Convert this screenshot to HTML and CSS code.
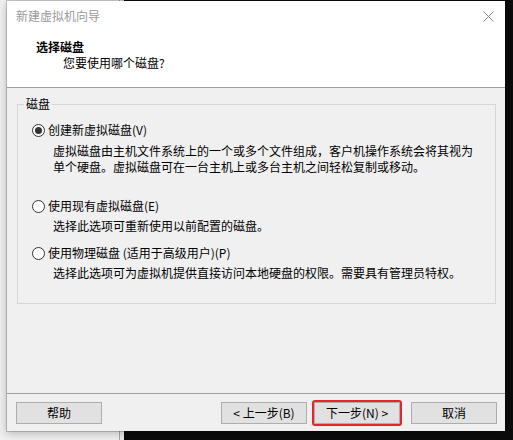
FILE: index.html
```html
<!DOCTYPE html>
<html lang="zh-CN">
<head>
<meta charset="utf-8">
<title>新建虚拟机向导</title>
<link rel="stylesheet" href="styles.css">
</head>
<body>
<div class="desktop">
  <div class="pane-left"></div>
  <div class="pane-split"></div>
  <div class="pane-gap"></div>
  <div class="pane-dark"></div>
</div>

<div class="dialog">
  <div class="titlebar">
    <span class="title">新建虚拟机向导</span>
    <svg class="close" width="11" height="11" viewBox="0 0 11 11">
      <path d="M0.5 0.5 L10.5 10.5 M10.5 0.5 L0.5 10.5" stroke="#8a8a8a" stroke-width="1" fill="none"/>
    </svg>
  </div>
  <div class="header">
    <div class="h-title">选择磁盘</div>
    <div class="h-sub">您要使用哪个磁盘?</div>
  </div>
  <div class="body">
    <fieldset class="group">
      <legend class="group-label">磁盘</legend>
      <div class="opt opt-first">
        <span class="radio checked"></span>
        <span class="opt-label">创建新虚拟磁盘(V)</span>
      </div>
      <div class="desc desc-first">虚拟磁盘由主机文件系统上的一个或多个文件组成，客户机操作系统会将其视为<br>单个硬盘。虚拟磁盘可在一台主机上或多台主机之间轻松复制或移动。</div>
      <div class="opt opt-second">
        <span class="radio"></span>
        <span class="opt-label">使用现有虚拟磁盘(E)</span>
      </div>
      <div class="desc">选择此选项可重新使用以前配置的磁盘。</div>
      <div class="opt opt-third">
        <span class="radio"></span>
        <span class="opt-label">使用物理磁盘 (适用于高级用户)(P)</span>
      </div>
      <div class="desc">选择此选项可为虚拟机提供直接访问本地硬盘的权限。需要具有管理员特权。</div>
    </fieldset>
  </div>
  <div class="footer">
    <button class="btn">帮助</button>
    <div class="spacer"></div>
    <button class="btn">&lt; 上一步(B)</button>
    <button class="btn btn-next">下一步(N) &gt;</button>
    <button class="btn btn-cancel">取消</button>
  </div>
</div>
</body>
</html>
```

FILE: styles.css
```css
html, body {
  margin: 0;
  padding: 0;
}
body {
  width: 513px;
  height: 440px;
  overflow: hidden;
  position: relative;
  font-family: "Noto Sans CJK SC", "Microsoft YaHei", sans-serif;
  font-size: 12px;
  color: #000;
}
.desktop {
  display: flex;
  height: 440px;
}
.pane-left {
  width: 119px;
  background: #f0f0f0;
}
.pane-split {
  width: 1px;
  background: #a8a8a8;
}
.pane-gap {
  width: 4px;
  background: #ececec;
}
.pane-dark {
  flex: 1;
  background: #0b0b0b;
}

.dialog {
  position: absolute;
  left: 7px;
  top: 1px;
  width: 498px;
  height: 430px;
  background: #f0f0f0;
  box-shadow: 0 0 0 1px rgba(0,0,0,0.18), -1px 3px 8px rgba(0,0,0,0.22);
  display: flex;
  flex-direction: column;
}

.titlebar {
  height: 30px;
  background: #fff;
  display: flex;
  align-items: center;
  justify-content: space-between;
  padding: 0 11px 0 9px;
}
.title {
  color: #9a9a9a;
  line-height: 16px;
}
.close {
  display: block;
}

.header {
  background: #fff;
  padding: 8px 0 16px 29px;
  border-bottom: 1px solid #a0a0a0;
}
.h-title {
  font-weight: bold;
  line-height: 16px;
}
.h-sub {
  line-height: 16px;
  padding-left: 27px;
}

.body {
  height: 305px;
  box-sizing: border-box;
  padding: 8px 9px 0 10px;
}
.group {
  margin: 0;
  padding: 10px 0 22px 0;
  border: 1px solid #d6d6d6;
  min-width: 0;
}
.group-label {
  margin-left: 6px;
  padding: 0 2px;
  line-height: 16px;
}

.opt {
  display: flex;
  align-items: center;
  height: 16px;
  line-height: 16px;
  margin-left: 14px;
}
.opt-second {
  margin-top: 23px;
}
.opt-third {
  margin-top: 11px;
}
.radio {
  width: 13px;
  height: 13px;
  box-sizing: border-box;
  border: 1px solid #333;
  border-radius: 50%;
  background: #fff;
  margin-right: 3px;
  display: flex;
  align-items: center;
  justify-content: center;
}
.radio.checked::after {
  content: "";
  width: 7px;
  height: 7px;
  border-radius: 50%;
  background: #333;
}
.desc {
  margin-top: 4px;
  padding-left: 35px;
  line-height: 16px;
}
.desc-first {
  margin-top: 5px;
}

.footer {
  flex: 1;
  border-top: 1px solid #a0a0a0;
  display: flex;
  align-items: flex-start;
  padding: 8px 8px 0 9px;
}
.spacer {
  flex: 1;
}
.btn {
  width: 86px;
  height: 22px;
  box-sizing: border-box;
  border: 1px solid #adadad;
  background: #e1e1e1;
  font-family: "Noto Sans CJK SC", "Microsoft YaHei", sans-serif;
  font-size: 12px;
  color: #000;
  padding: 0;
  line-height: 18px;
  margin: 0;
}
.btn-next {
  margin-left: 7px;
  outline: 2px solid #e3262b;
  outline-offset: 0;
  border-radius: 1px;
}
.btn-cancel {
  margin-left: 11px;
}
```
